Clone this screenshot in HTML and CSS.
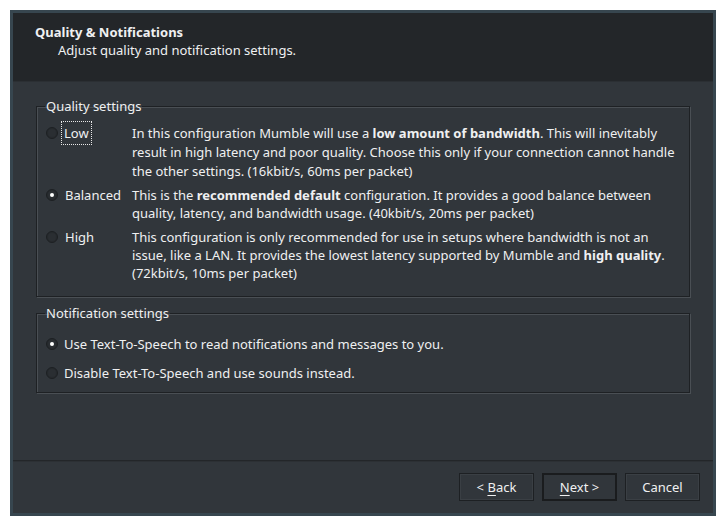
FILE: index.html
```html
<!DOCTYPE html>
<html>
<head>
<meta charset="utf-8">
<link rel="stylesheet" href="styles.css">
</head>
<body>
<div class="window">
  <div class="header">
    <div class="title">Quality &amp; Notifications</div>
    <div class="subtitle">Adjust quality and notification settings.</div>
  </div>
  <div class="content">
    <fieldset class="group group-quality">
      <legend>Quality settings</legend>
      <div class="qrow row-low">
        <span class="radio"></span>
        <span class="qlabel"><span class="focus">Low</span></span>
        <span class="qdesc">In this configuration Mumble will use a <b>low amount of bandwidth</b>. This will inevitably result in high latency and poor quality. Choose this only if your connection cannot handle the other settings. (16kbit/s, 60ms per packet)</span>
      </div>
      <div class="qrow row-balanced">
        <span class="radio checked"></span>
        <span class="qlabel">Balanced</span>
        <span class="qdesc">This is the <b>recommended default</b> configuration. It provides a good balance between quality, latency, and bandwidth usage. (40kbit/s, 20ms per packet)</span>
      </div>
      <div class="qrow row-high">
        <span class="radio"></span>
        <span class="qlabel">High</span>
        <span class="qdesc">This configuration is only recommended for use in setups where bandwidth is not an issue, like a LAN. It provides the lowest latency supported by Mumble and <b>high quality</b>. (72kbit/s, 10ms per packet)</span>
      </div>
    </fieldset>
    <fieldset class="group group-notif">
      <legend>Notification settings</legend>
      <div class="nrow"><span class="radio checked"></span><span>Use Text-To-Speech to read notifications and messages to you.</span></div>
      <div class="nrow"><span class="radio"></span><span>Disable Text-To-Speech and use sounds instead.</span></div>
    </fieldset>
  </div>
  <div class="footer">
    <button class="btn">&lt; <u>B</u>ack</button>
    <button class="btn default"><u>N</u>ext &gt;</button>
    <button class="btn">Cancel</button>
  </div>
</div>
</body>
</html>
```
FILE: styles.css
```css
html, body {
  margin: 0;
  padding: 0;
  background: #ffffff;
}
body {
  padding: 10px;
  font-family: "Noto Sans", "DejaVu Sans", sans-serif;
  font-size: 13px;
  color: #eff0f1;
}
.window {
  width: 700px;
  height: 500px;
  border: 3px solid #37464f;
  background: #31363b;
  display: flex;
  flex-direction: column;
}
.header {
  background: #232629;
  border-bottom: 1px solid #2b2f33;
  padding: 10px 0 0 22px;
  box-sizing: border-box;
  height: 69px;
}
.title {
  font-weight: bold;
  line-height: 18px;
}
.subtitle {
  padding-left: 23px;
  line-height: 18px;
}
.content {
  flex: 1;
  padding: 15px 23px 0 23px;
  display: flex;
  flex-direction: column;
  gap: 7px;
}
.group {
  margin: 0;
  border: 1px solid #1e2124;
  box-shadow: 1px 1px 0 #4a4f54, inset 1px 1px 0 #4a4f54;
  padding: 0 8px 0 9px;
  min-width: 0;
}
.group legend {
  padding: 0 1px;
  margin-left: -1px;
  line-height: 18px;
}
.group-quality {
  padding-top: 9px;
  padding-bottom: 14px;
  display: flex;
  flex-direction: column;
}
.qrow {
  display: grid;
  grid-template-columns: 19px 67px 1fr;
  line-height: 18px;
  align-items: start;
}
.qrow.row-low {
  line-height: 19px;
}
.qrow.row-balanced {
  margin-top: 5px;
}
.qrow.row-high {
  margin-top: 6px;
}
.qrow .radio {
  margin-top: 3px;
}
.focus {
  outline: 1px dotted #e8e8e8;
  outline-offset: 1px;
  padding: 1px 1px;
  margin-left: -2px;
}
.qdesc {
  padding-right: 1px;
}
.radio {
  display: inline-block;
  width: 12px;
  height: 12px;
  box-sizing: border-box;
  border-radius: 50%;
  background: #2a2e32;
  border: 1px solid #1d2023;
  box-shadow: inset 0 0 0 1px #262a2d;
  position: relative;
}
.radio.checked::after {
  content: "";
  position: absolute;
  left: 3px;
  top: 3px;
  width: 4px;
  height: 4px;
  border-radius: 50%;
  background: #ffffff;
}
.group-notif {
  padding-top: 13px;
  padding-bottom: 10px;
  display: flex;
  flex-direction: column;
  gap: 11px;
}
.nrow {
  display: flex;
  align-items: center;
  gap: 6px;
  line-height: 18px;
}
.footer {
  height: 53px;
  border-top: 1px solid #232629;
  box-shadow: inset 0 1px 0 #2c3034;
  display: flex;
  justify-content: flex-end;
  align-items: flex-start;
  gap: 8px;
  padding: 12px 13px 0 0;
  box-sizing: border-box;
}
.btn {
  width: 75px;
  height: 28px;
  background: #31363b;
  border: 1px solid #1d2023;
  box-shadow: inset 0 0 0 1px #3a3f44;
  color: #eff0f1;
  font-family: "Noto Sans", "DejaVu Sans", sans-serif;
  font-size: 13px;
  padding: 0;
  margin: 0;
}
.btn.default {
  border: 2px solid #1a1c1e;
  box-shadow: none;
}
.btn u {
  text-decoration-thickness: 1px;
  text-underline-offset: 3px;
}
```
